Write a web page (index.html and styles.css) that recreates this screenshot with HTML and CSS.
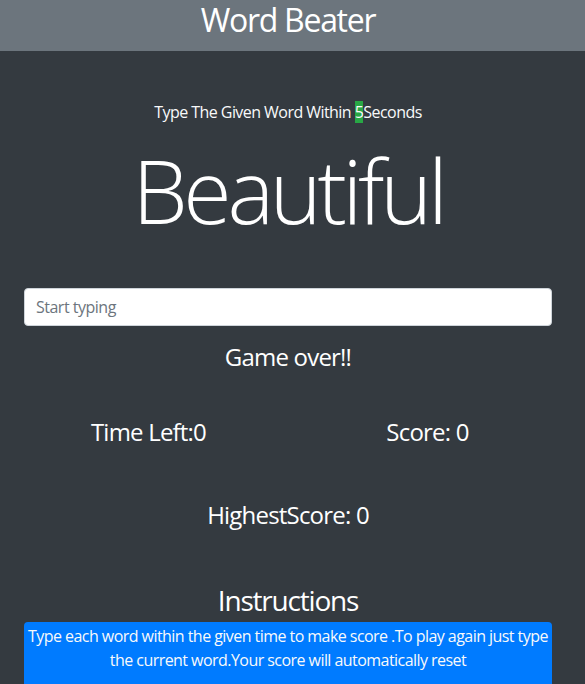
FILE: index.html
```html
<!DOCTYPE html>
<html lang="en">
<head>
<meta charset="utf-8">
<title>Word Beater</title>
<link rel="stylesheet" href="styles.css">
</head>
<body>
<header class="topbar">
  <h1 class="brand">Word Beater</h1>
</header>
<main class="container">
  <p class="lead-line">Type The Given Word Within <span class="secs">5</span>Seconds</p>
  <h2 class="current-word">Beautiful</h2>
  <input class="word-input" type="text" placeholder="Start typing">
  <h4 class="message">Game over!!</h4>
  <div class="stats">
    <h3 class="stat">Time Left:<span>0</span></h3>
    <h3 class="stat">Score: <span>0</span></h3>
  </div>
  <h3 class="stat highest">HighestScore: <span>0</span></h3>
  <h3 class="instr-title">Instructions</h3>
  <div class="instr-box">Type each word within the given time to make score .To play again just type the current word.Your score will automatically reset</div>
</main>
</body>
</html>
```

FILE: styles.css
```css
html, body {
  margin: 0;
  padding: 0;
}
body {
  background: #343a40;
  color: #ffffff;
  font-family: "Open Sans", "Noto Sans", sans-serif;
  font-size: 16px;
  line-height: 1.5;
  height: 684px;
  overflow: hidden;
}
.topbar {
  background: #6c757d;
  height: 51px;
  padding-right: 9px;
  text-align: center;
}
.brand {
  margin: 0;
  padding-top: 5px;
  font-size: 32px;
  font-weight: 400;
  line-height: 29px;
  letter-spacing: -1.3px;
}
.container {
  padding: 0 33px 0 24px;
  text-align: center;
}
.lead-line {
  margin: 49px 0 0;
  line-height: 24px;
  font-size: 16px;
  letter-spacing: -0.55px;
  color: #f8f9fa;
}
.secs {
  background: #28a745;
}
.current-word {
  margin: 13px 0 0;
  font-size: 88px;
  font-weight: 300;
  line-height: 106px;
  letter-spacing: -4.3px;
}
.word-input {
  display: block;
  box-sizing: border-box;
  width: 100%;
  height: 38px;
  margin: 45px 0 0;
  padding: 6px 11px;
  border: 1px solid #ced4da;
  border-radius: 4px;
  background: #fff;
  font-family: inherit;
  font-size: 16px;
  letter-spacing: -0.5px;
  color: #495057;
}
.word-input::placeholder {
  color: #6c757d;
}
.message {
  margin: 16px 0 0;
  font-size: 24px;
  font-weight: 400;
  line-height: 29px;
  letter-spacing: -0.8px;
}
.stats {
  display: grid;
  grid-template-columns: 1fr 1fr;
  margin: 46px -15px 0;
}
.stat {
  margin: 0;
  font-size: 24px;
  font-weight: 400;
  line-height: 29px;
  letter-spacing: -0.8px;
}
.highest {
  margin-top: 54px;
}
.instr-title {
  margin: 54px 0 0;
  font-size: 28px;
  font-weight: 400;
  line-height: 34px;
  letter-spacing: -1.2px;
}
.instr-box {
  margin-top: 5px;
  background: #007bff;
  border-radius: 4px 4px 0 0;
  padding: 2px 2px 40px;
  line-height: 24px;
  letter-spacing: -0.55px;
  color: #f8f9fa;
}
```
